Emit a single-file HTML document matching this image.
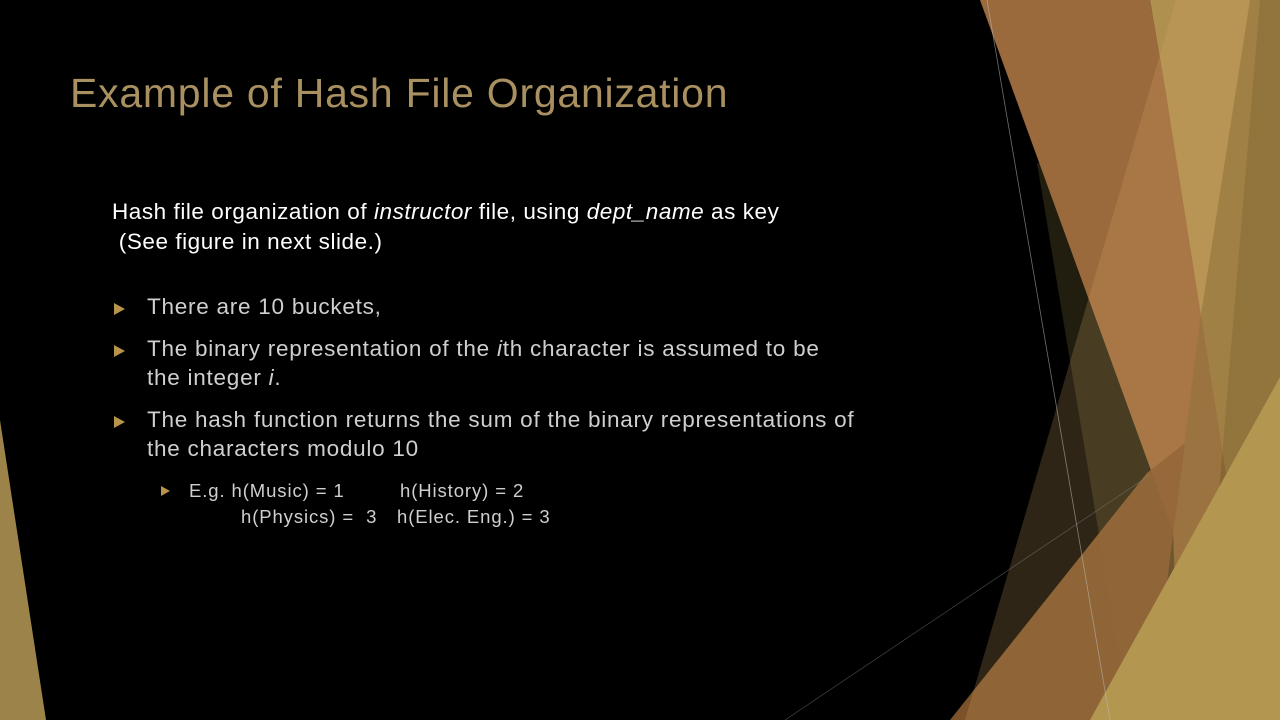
<!DOCTYPE html>
<html><head><meta charset="utf-8"><style>
html,body{margin:0;padding:0;background:#000;}
#s{position:relative;width:1280px;height:720px;overflow:hidden;background:#000;font-family:"Liberation Sans",sans-serif;}
svg{position:absolute;left:0;top:0;}
.t{position:absolute;white-space:nowrap;}
#title{left:70px;top:70px;font-size:41px;color:#a89060;letter-spacing:0.75px;}
.w{color:#fff;font-size:22.5px;left:112px;letter-spacing:0.55px;}
.b{color:#cfcfcf;font-size:22.5px;left:147px;letter-spacing:0.75px;}
.tri{position:absolute;width:0;height:0;border-top:6px solid transparent;border-bottom:6px solid transparent;border-left:11px solid #b8944a;}
.s{color:#cfcfcf;font-size:18.5px;letter-spacing:0.9px;}
</style></head><body><div id="s">
<svg width="1280" height="720" viewBox="0 0 1280 720">
<polygon points="0,420 46,720 0,720" fill="#9c834a"/>
<polygon points="1037,163 1130,720 1190,720 1173,531 1040,163" fill="#211e10"/>
<polygon points="980,0 1150,0 1273,720 1180,720 1173,531" fill="#9b6a3c"/>
<polygon points="1150,0 1280,0 1280,720 1273,720 1227,480 1167,100" fill="#b0904f"/>
<polygon points="950,720 1147,473 1185,443 1173,535 1160,640 1090,720" fill="#83562c" opacity="0.95"/>
<polygon points="1250,0 1280,0 1280,720 1150,720 1173,535 1200,321" fill="#7a5e30" opacity="0.55"/>
<polygon points="1176,0 1260,0 1200,720 965,720" fill="#d8a868" opacity="0.22"/>
<polygon points="1090,720 1280,377 1280,720" fill="#b39650"/>
<line x1="987" y1="0" x2="1110" y2="720" stroke="#bbb" stroke-width="0.8" opacity="0.6"/>
<line x1="785" y1="720" x2="1150" y2="475" stroke="#888" stroke-width="0.7" opacity="0.5"/>
</svg>
<div class="t" id="title">Example of Hash File Organization</div>
<div class="t w" style="top:199px">Hash file organization of <i>instructor</i> file, using <i>dept_name</i> as key</div>
<div class="t w" style="top:229px">&nbsp;(See figure in next slide.)</div>
<div class="tri" style="left:114px;top:303px"></div>
<div class="t b" style="top:294px">There are 10 buckets,</div>
<div class="tri" style="left:114px;top:345px"></div>
<div class="t b" style="top:336px">The binary representation of the <i>i</i>th character is assumed to be</div>
<div class="t b" style="top:365px">the integer <i>i</i>.</div>
<div class="tri" style="left:114px;top:416px"></div>
<div class="t b" style="top:407px">The hash function returns the sum of the binary representations of</div>
<div class="t b" style="top:436px">the characters modulo 10</div>
<div class="tri" style="left:161px;top:486px;border-top-width:5px;border-bottom-width:5px;border-left-width:9px"></div>
<div class="t s" style="left:189px;top:480px">E.g. h(Music) = 1</div>
<div class="t s" style="left:400px;top:480px">h(History) = 2</div>
<div class="t s" style="left:241px;top:506px">h(Physics) = &nbsp;3</div>
<div class="t s" style="left:397px;top:506px">h(Elec. Eng.) = 3</div>
</div></body></html>
